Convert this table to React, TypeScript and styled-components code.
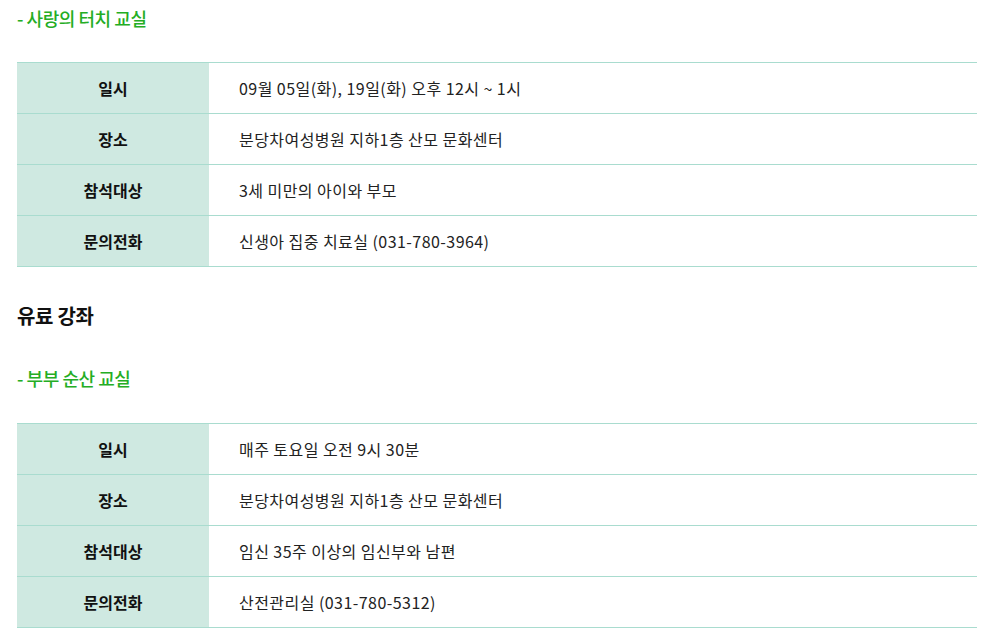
import React from "react";
import styled, { createGlobalStyle } from "styled-components";

const Global = createGlobalStyle`
  html, body { margin: 0; padding: 0; background: #fff; }
  body { font-family: "Noto Sans CJK KR", "Noto Sans", sans-serif; color: #222; }
`;

const Page = styled.div`
  padding: 0 11px 0 17px;
  display: flex;
  flex-direction: column;
`;

const SubTitle = styled.h4`
  margin: 0;
  font-size: 18px;
  font-weight: 500;
  color: #24ad24;
  line-height: 24px;
  letter-spacing: -0.45px;
  padding-top: ${(p: { $top: number }) => p.$top}px;
`;

const Title = styled.h3`
  margin: 0;
  padding-top: 36px;
  font-size: 20px;
  font-weight: 700;
  color: #111;
  line-height: 26px;
  letter-spacing: -0.3px;
`;

const Table = styled.table`
  width: 100%;
  border-collapse: collapse;
  margin-top: ${(p: { $top: number }) => p.$top}px;
  border-top: 1px solid #a9dccf;
`;

const Row = styled.tr`
  border-bottom: 1px solid #a9dccf;
`;

const Th = styled.th`
  width: 192px;
  height: 50px;
  padding: 0;
  background: #cfe9e1;
  font-size: 16px;
  font-weight: 700;
  color: #111;
  text-align: center;
`;

const Td = styled.td`
  height: 50px;
  padding: 0 0 0 30px;
  font-size: 16px;
  font-weight: 400;
  color: #222;
  text-align: left;
  letter-spacing: 0.45px;
`;

type Item = [string, string];

const touch: Item[] = [
  ["일시", "09월 05일(화), 19일(화) 오후 12시 ~ 1시"],
  ["장소", "분당차여성병원 지하1층 산모 문화센터"],
  ["참석대상", "3세 미만의 아이와 부모"],
  ["문의전화", "신생아 집중 치료실 (031-780-3964)"],
];

const birth: Item[] = [
  ["일시", "매주 토요일 오전 9시 30분"],
  ["장소", "분당차여성병원 지하1층 산모 문화센터"],
  ["참석대상", "임신 35주 이상의 임신부와 남편"],
  ["문의전화", "산전관리실 (031-780-5312)"],
];

function InfoTable({ items, top }: { items: Item[]; top: number }) {
  return (
    <Table $top={top}>
      <tbody>
        {items.map(([k, v]) => (
          <Row key={k}>
            <Th scope="row">{k}</Th>
            <Td>{v}</Td>
          </Row>
        ))}
      </tbody>
    </Table>
  );
}

export default function App() {
  return (
    <>
      <Global />
      <Page>
        <SubTitle $top={6}>- 사랑의 터치 교실</SubTitle>
        <InfoTable items={touch} top={32} />
        <Title>유료 강좌</Title>
        <SubTitle $top={37}>- 부부 순산 교실</SubTitle>
        <InfoTable items={birth} top={33} />
      </Page>
    </>
  );
}
